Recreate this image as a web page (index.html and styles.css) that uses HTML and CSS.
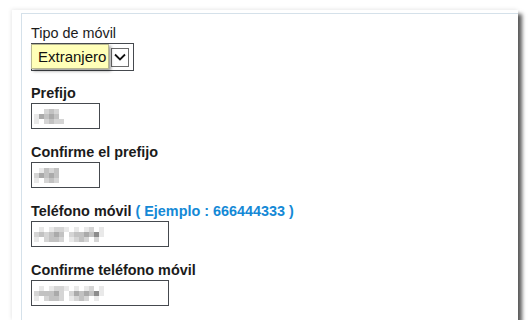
FILE: index.html
```html
<!DOCTYPE html>
<html lang="es">
<head>
    <meta charset="UTF-8">
    <title>Datos del móvil</title>
    <link rel="stylesheet" href="styles.css">
</head>
<body>
    <div class="card">
        <div class="panel">
            <div class="field">
                <label class="plain">Tipo de móvil</label>
                <div class="select">
                    <div class="tip">Extranjero</div>
                    <div class="arrow">
                        <svg width="12" height="8" viewBox="0 0 12 8"><path d="M1 1.5 L6 6.5 L11 1.5" fill="none" stroke="#111" stroke-width="1.8"/></svg>
                    </div>
                </div>
            </div>

            <div class="field">
                <label>Prefijo</label>
                <div class="input short"><span class="blur" data-rows="  232 |14343 |1 2322"></span></div>
            </div>

            <div class="field">
                <label>Confirme el prefijo</label>
                <div class="input short"><span class="blur" data-rows=" 1323|24343|1 232"></span></div>
            </div>

            <div class="field">
                <label>Teléfono móvil <span class="hint">( Ejemplo : 666444333 )</span></label>
                <div class="input long"><span class="blur" data-rows=" 1 1221 1 12 1 |232343 2334351 |1 2332 1232 2  "></span></div>
            </div>

            <div class="field">
                <label>Confirme teléfono móvil</label>
                <div class="input long"><span class="blur" data-rows=" 1 1221 1 12 1 |233342 2434351 |1 2332 1232 1  "></span></div>
            </div>
        </div>
    </div>

    <script>
        // masked values: each digit of data-rows is one grey cell
        document.querySelectorAll('.blur').forEach(blur => {
            blur.dataset.rows.split('|').forEach(row => {
                const line = document.createElement('span');
                line.className = 'row';
                row.split('').forEach(ch => {
                    const cell = document.createElement('span');
                    cell.className = 'px s' + (ch === ' ' ? 0 : ch);
                    line.appendChild(cell);
                });
                blur.appendChild(line);
            });
        });
    </script>
</body>
</html>
```

FILE: styles.css
```css
body { margin: 0; background: #fff; font-family: "Liberation Sans", Arial, sans-serif; font-size: 14.4px; color: #1b1b1b; }
.card { margin: 10px 0 0 12px; width: 506px; height: 310px; background: #fff; box-shadow: 4px 4px 4px rgba(0,0,0,0.65), -1px -1px 4px rgba(0,0,0,0.08); box-sizing: border-box; padding: 3px 0 0 9px; }
.panel { height: 100%; border-top: 1px solid #d5e1ea; border-left: 1px solid #d5e1ea; padding: 12px 0 0 9px; box-sizing: border-box; }
.field { margin-bottom: 16px; }
label { display: block; font-weight: bold; line-height: 15px; margin-bottom: 2px; }
label.plain { font-weight: normal; }
.hint { color: #1489d6; }
.select { position: relative; width: 103px; height: 28px; border: 1px solid #45494e; box-sizing: border-box; display: flex; justify-content: flex-end; align-items: center; padding-right: 4px; margin-bottom: -1px; }
.tip { position: absolute; left: -1px; top: 0; width: 78px; height: 25px; box-sizing: border-box; background: #ffffb8; border: 1px solid #b8b890; box-shadow: 2px 2px 3px rgba(0,0,0,0.4); font-size: 15px; line-height: 23px; padding-left: 6px; color: #111; }
.arrow { width: 18px; height: 19px; border: 1px solid #6c6c6c; box-sizing: border-box; display: flex; align-items: center; justify-content: center; }
.input { height: 26px; border: 1px solid #45494e; box-sizing: border-box; padding: 5px 0 0 2px; }
.short { width: 69px; }
.long { width: 138px; }
.blur { display: block; }
.row { display: flex; height: 5px; }
.px { width: 5px; height: 5px; }
.s0 { background: transparent; }
.s1 { background: #e9e9e9; }
.s2 { background: #d5d5d5; }
.s3 { background: #c2c2c2; }
.s4 { background: #aaaaaa; }
.s5 { background: #8c8c8c; }
```
